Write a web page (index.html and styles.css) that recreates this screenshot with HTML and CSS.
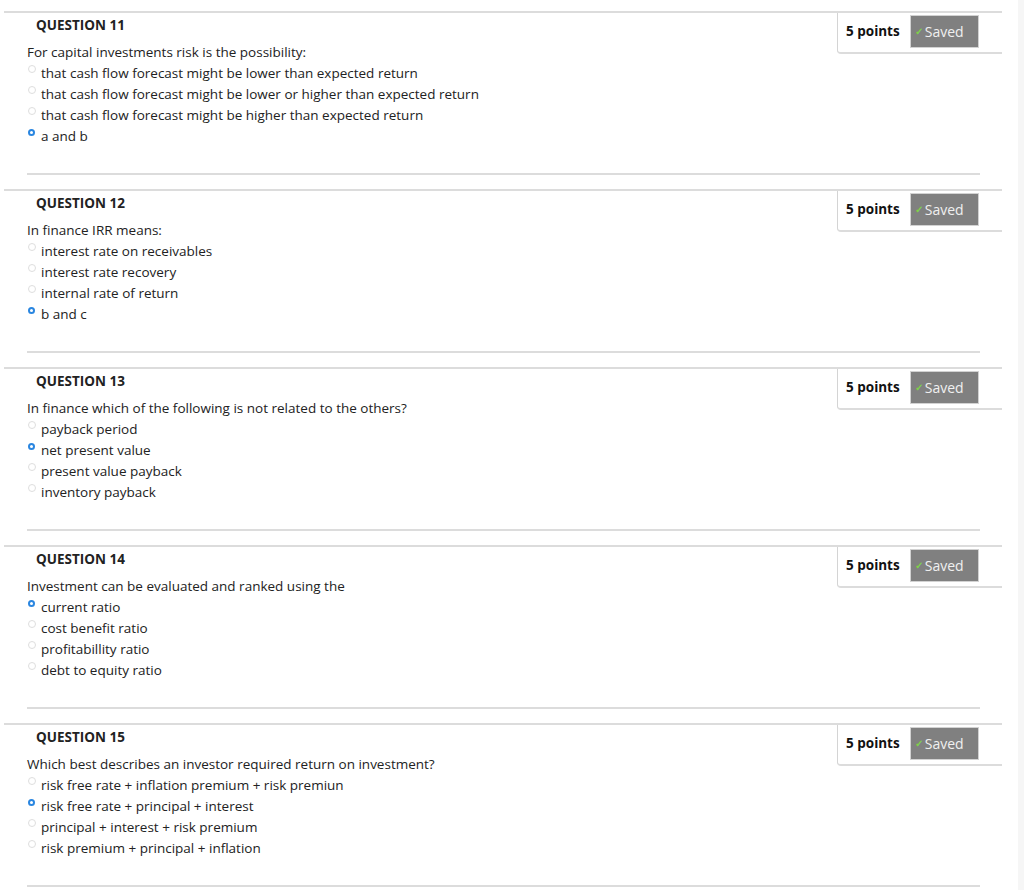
FILE: index.html
```html
<!DOCTYPE html>
<html>
<head>
<meta charset="utf-8">
<link rel="stylesheet" href="styles.css">
</head>
<body>
<div class="page">
  <div class="question">
    <div class="points"><span class="pts">5 points</span><span class="saved"><span class="check">&#10003;</span>Saved</span></div>
    <h3 class="qtitle">QUESTION 11</h3>
    <div class="body">
      <p class="qtext">For capital investments risk is the possibility:</p>
      <ul class="options">
        <li><span class="radio"></span>that cash flow forecast might be lower than expected return</li>
        <li><span class="radio"></span>that cash flow forecast might be lower or higher than expected return</li>
        <li><span class="radio"></span>that cash flow forecast might be higher than expected return</li>
        <li><span class="radio on"></span>a and b</li>
      </ul>
      <hr class="divider">
    </div>
  </div>
  <div class="question">
    <div class="points"><span class="pts">5 points</span><span class="saved"><span class="check">&#10003;</span>Saved</span></div>
    <h3 class="qtitle">QUESTION 12</h3>
    <div class="body">
      <p class="qtext">In finance IRR means:</p>
      <ul class="options">
        <li><span class="radio"></span>interest rate on receivables</li>
        <li><span class="radio"></span>interest rate recovery</li>
        <li><span class="radio"></span>internal rate of return</li>
        <li><span class="radio on"></span>b and c</li>
      </ul>
      <hr class="divider">
    </div>
  </div>
  <div class="question">
    <div class="points"><span class="pts">5 points</span><span class="saved"><span class="check">&#10003;</span>Saved</span></div>
    <h3 class="qtitle">QUESTION 13</h3>
    <div class="body">
      <p class="qtext">In finance which of the following is not related to the others?</p>
      <ul class="options">
        <li><span class="radio"></span>payback period</li>
        <li><span class="radio on"></span>net present value</li>
        <li><span class="radio"></span>present value payback</li>
        <li><span class="radio"></span>inventory payback</li>
      </ul>
      <hr class="divider">
    </div>
  </div>
  <div class="question">
    <div class="points"><span class="pts">5 points</span><span class="saved"><span class="check">&#10003;</span>Saved</span></div>
    <h3 class="qtitle">QUESTION 14</h3>
    <div class="body">
      <p class="qtext">Investment can be evaluated and ranked using the</p>
      <ul class="options">
        <li><span class="radio on"></span>current ratio</li>
        <li><span class="radio"></span>cost benefit ratio</li>
        <li><span class="radio"></span>profitabillity ratio</li>
        <li><span class="radio"></span>debt to equity ratio</li>
      </ul>
      <hr class="divider">
    </div>
  </div>
  <div class="question">
    <div class="points"><span class="pts">5 points</span><span class="saved"><span class="check">&#10003;</span>Saved</span></div>
    <h3 class="qtitle">QUESTION 15</h3>
    <div class="body">
      <p class="qtext">Which best describes an investor required return on investment?</p>
      <ul class="options">
        <li><span class="radio"></span>risk free rate + inflation premium + risk premiun</li>
        <li><span class="radio on"></span>risk free rate + principal + interest</li>
        <li><span class="radio"></span>principal + interest + risk premium</li>
        <li><span class="radio"></span>risk premium + principal + inflation</li>
      </ul>
      <hr class="divider">
    </div>
  </div>
</div>
<div class="scrollstrip"></div>
</body>
</html>
```
FILE: styles.css
```css
html, body {
  margin: 0;
  padding: 0;
  background: #ffffff;
}
body {
  font-family: "Open Sans", "Liberation Sans", sans-serif;
  font-size: 13.5px;
  line-height: 21px;
  color: #222;
  min-height: 890px;
}
.page {
  padding-top: 11px;
  width: 998px;
  margin-left: 4px;
}
.question {
  border-top: 2px solid #dcdcdc;
}
.points {
  float: right;
  box-sizing: border-box;
  width: 165px;
  height: 41px;
  border-left: 1px solid #d4d4d4;
  border-bottom: 2px solid #dcdcdc;
  border-bottom-left-radius: 4px;
  display: flex;
  align-items: center;
  padding: 0 0 3px 8px;
  gap: 10px;
}
.pts {
  font-weight: 700;
  color: #111;
  font-size: 13.5px;
}
.saved {
  box-sizing: border-box;
  width: 69px;
  height: 33px;
  background: #808080;
  border: 1px solid #d2d2d2;
  color: #f0f0f0;
  font-size: 14px;
  display: flex;
  align-items: center;
  padding-left: 4px;
}
.check {
  color: #7ed04b;
  font-size: 10px;
  font-weight: 700;
  margin-right: 2px;
  line-height: 1;
}
.qtitle {
  margin: 0;
  padding: 2px 0 0 32px;
  font-size: 13.5px;
  line-height: 21px;
  font-weight: 700;
  color: #222;
}
.body {
  padding-left: 23px;
}
.qtext {
  margin: 6px 0 0 0;
}
.options {
  list-style: none;
  margin: 0;
  padding: 0;
}
.options li {
  display: flex;
  align-items: flex-start;
}
.radio {
  box-sizing: border-box;
  width: 8px;
  height: 8px;
  border-radius: 50%;
  border: 1px solid #dedede;
  background: #fff;
  margin: 2px 5px 0 1px;
  flex: none;
}
.radio.on {
  width: 7px;
  height: 7px;
  margin: 3px 6px 0 1px;
  border: 2px solid #2a86e0;
}
.divider {
  border: 0;
  border-top: 2px solid #dcdcdc;
  margin: 26px 22px 14px 0;
  width: 953px;
}
.scrollstrip {
  position: fixed;
  top: 0;
  right: 0;
  width: 6px;
  height: 100%;
  background: #f6f6f6;
}
```
